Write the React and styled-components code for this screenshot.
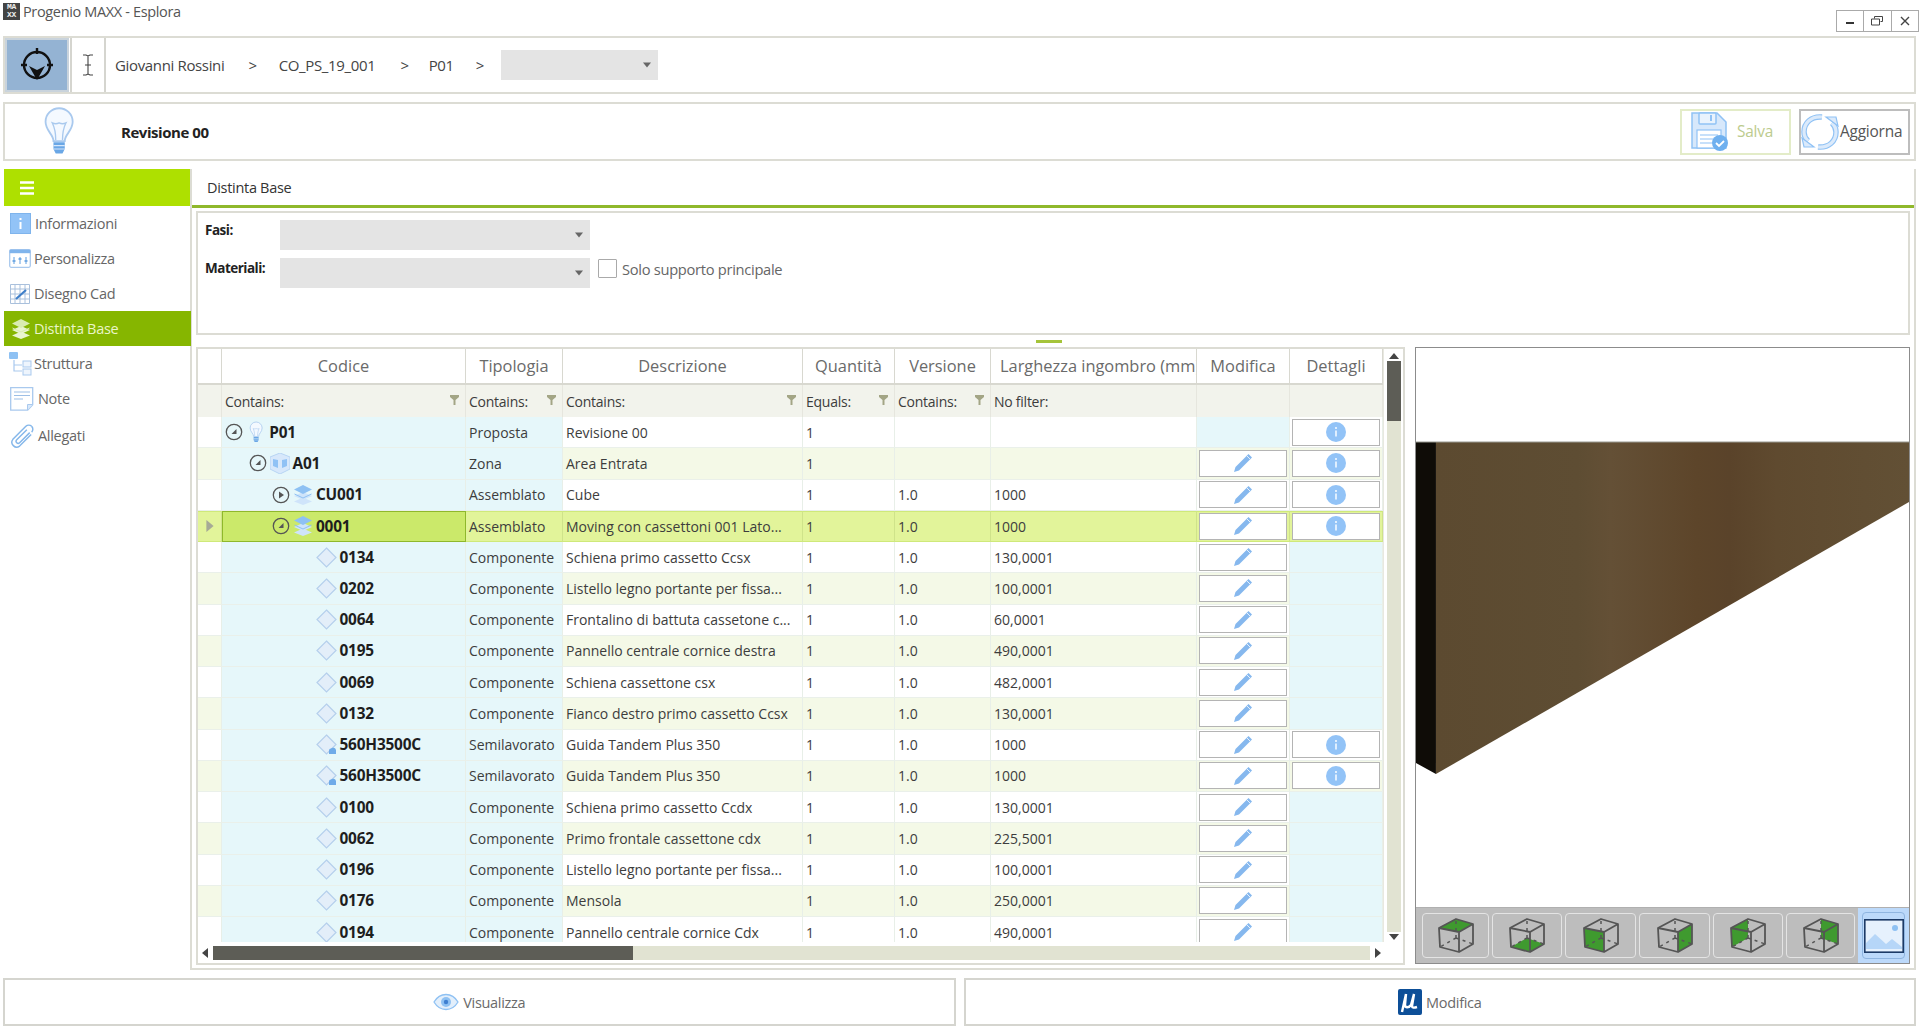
import React from "react"
import styled, { createGlobalStyle } from "styled-components"

const COLS = "24px 244px 97px 240px 92px 96px 206px 93px 93px"

const ROWS = [
  { code: "P01", type: "Proposta", desc: "Revisione 00", qty: "1", ver: "", size: "", level: 0, icon: "bulb", toggle: "open", noEdit: true, info: true },
  { code: "A01", type: "Zona", desc: "Area Entrata", qty: "1", ver: "", size: "", level: 1, icon: "zone", toggle: "open", info: true },
  { code: "CU001", type: "Assemblato", desc: "Cube", qty: "1", ver: "1.0", size: "1000", level: 2, icon: "layers", toggle: "closed", info: true },
  { code: "0001", type: "Assemblato", desc: "Moving con cassettoni 001 Lato...", qty: "1", ver: "1.0", size: "1000", level: 2, icon: "layers", toggle: "open", info: true, selected: true },
  { code: "0134", type: "Componente", desc: "Schiena primo cassetto Ccsx", qty: "1", ver: "1.0", size: "130,0001", level: 3, icon: "diamond" },
  { code: "0202", type: "Componente", desc: "Listello legno portante per fissa...", qty: "1", ver: "1.0", size: "100,0001", level: 3, icon: "diamond" },
  { code: "0064", type: "Componente", desc: "Frontalino di battuta cassetone c...", qty: "1", ver: "1.0", size: "60,0001", level: 3, icon: "diamond" },
  { code: "0195", type: "Componente", desc: "Pannello centrale cornice destra", qty: "1", ver: "1.0", size: "490,0001", level: 3, icon: "diamond" },
  { code: "0069", type: "Componente", desc: "Schiena cassettone csx", qty: "1", ver: "1.0", size: "482,0001", level: 3, icon: "diamond" },
  { code: "0132", type: "Componente", desc: "Fianco destro primo cassetto Ccsx", qty: "1", ver: "1.0", size: "130,0001", level: 3, icon: "diamond" },
  { code: "560H3500C", type: "Semilavorato", desc: "Guida Tandem Plus 350", qty: "1", ver: "1.0", size: "1000", level: 3, icon: "semi", info: true },
  { code: "560H3500C", type: "Semilavorato", desc: "Guida Tandem Plus 350", qty: "1", ver: "1.0", size: "1000", level: 3, icon: "semi", info: true },
  { code: "0100", type: "Componente", desc: "Schiena primo cassetto Ccdx", qty: "1", ver: "1.0", size: "130,0001", level: 3, icon: "diamond" },
  { code: "0062", type: "Componente", desc: "Primo frontale cassettone cdx", qty: "1", ver: "1.0", size: "225,5001", level: 3, icon: "diamond" },
  { code: "0196", type: "Componente", desc: "Listello legno portante per fissa...", qty: "1", ver: "1.0", size: "100,0001", level: 3, icon: "diamond" },
  { code: "0176", type: "Componente", desc: "Mensola", qty: "1", ver: "1.0", size: "250,0001", level: 3, icon: "diamond" },
  { code: "0194", type: "Componente", desc: "Pannello centrale cornice Cdx", qty: "1", ver: "1.0", size: "490,0001", level: 3, icon: "diamond" },
]

const FILTERS = ["Contains:", "Contains:", "Contains:", "Equals:", "Contains:", "No filter:"]

const blue = "#90c2f5"
const pale = "#d7e8fb"
const line = "#a9c9ee"

const Bulb = ({ size = 46 }) => (
  <svg width={size * 0.62} height={size} viewBox="0 0 28 46">
    <path d="M9 31c0-6-7-9-7-17a12 12 0 0 1 24 0c0 8-7 11-7 17z" fill="#f4f9ff" stroke={line} strokeWidth="1.6" />
    <path d="M11 30c0-6-1-11-3-15 2 1 4 1 6 0 2 1 4 1 6 0-2 4-3 9-3 15" fill="none" stroke={line} strokeWidth="1.2" />
    <path d="M9 32h10v6l-2 4h-6l-2-4z" fill="#6aa7e6" />
    <path d="M9 35h10M9 38h10" stroke="#d7e8fb" strokeWidth="1" />
  </svg>
)

const Target = () => (
  <svg width="34" height="36" viewBox="0 0 34 36">
    <circle cx="17" cy="18" r="13" fill="none" stroke="#111" strokeWidth="2.4" />
    <path d="M17 1v6M1 18h6M33 18h-6" stroke="#111" strokeWidth="2.4" />
    <path d="M9 19l8 4 8-4-8 14z" fill="#111" />
  </svg>
)

const Cursor = () => (
  <svg width="12" height="24" viewBox="0 0 12 24">
    <path d="M1 2h3l2 1 2-1h3M1 22h3l2-1 2 1h3M6 3v18M3 12h6" fill="none" stroke="#444" strokeWidth="1.1" />
  </svg>
)

const Save = () => (
  <svg width="38" height="40" viewBox="0 0 38 40">
    <path d="M1 1h25l9 9v26H1z" fill="#d7e8fb" stroke={blue} strokeWidth="1.5" />
    <rect x="8" y="1" width="17" height="11" rx="1" fill="#e9f3fd" stroke={blue} strokeWidth="1.5" />
    <rect x="19" y="3" width="2" height="6" fill={blue} />
    <rect x="6" y="18" width="24" height="18" fill="#fff" stroke={blue} strokeWidth="1.2" />
    <path d="M9 23h18M9 27h14M9 31h12" stroke={blue} strokeWidth="1.2" />
    <circle cx="29" cy="31" r="8" fill="#6fb0ef" />
    <path d="M25 31l3 3 5-5" fill="none" stroke="#fff" strokeWidth="1.8" />
  </svg>
)

const REFRESH_ARCS = "M21 4C10 3 3 10 3 19c0 4 2 7 4 9M17 34c11 1 18-6 18-15 0-4-2-7-4-9"

const Refresh = () => (
  <svg width="38" height="38" viewBox="0 0 38 38">
    <path d={REFRESH_ARCS} fill="none" stroke={blue} strokeWidth="5.5" />
    <path d={REFRESH_ARCS} fill="none" stroke="#dbeafb" strokeWidth="3.2" />
    <path d="M1 25l12 9H3zM37 13L25 4h10z" fill="#dbeafb" stroke={blue} strokeWidth="1.2" />
  </svg>
)

const MenuBars = () => (
  <svg width="14" height="14" viewBox="0 0 14 14">
    <path d="M0 1.5h14M0 7h14M0 12.5h14" stroke="#fff" strokeWidth="2.6" />
  </svg>
)

const NavInfo = () => (
  <svg width="21" height="21" viewBox="0 0 21 21">
    <rect x="0.5" y="0.5" width="20" height="20" fill="#92c3f7" stroke="#7fb4ec" />
    <path d="M10.5 5v2M10.5 9v7" stroke="#fff" strokeWidth="2" />
  </svg>
)

const NavCustom = () => (
  <svg width="22" height="19" viewBox="0 0 22 19">
    <rect x="0.7" y="0.7" width="20.6" height="17.6" rx="1.5" fill="#fff" stroke="#a9c9ee" strokeWidth="1.3" />
    <rect x="0.7" y="0.7" width="20.6" height="3.5" fill="#7fb4ec" />
    <path d="M5 8v7M11 8v7M17 8v7" stroke="#5f9ee0" strokeWidth="1" />
    <path d="M3.5 12h3M9.5 10h3M15.5 12h3" stroke="#5f9ee0" strokeWidth="1.6" />
  </svg>
)

const NavCad = () => (
  <svg width="20" height="20" viewBox="0 0 20 20">
    <path d="M.5.5h19v19H.5zM.5 5h19M.5 10h19M.5 15h19M5 .5v19M10 .5v19M15 .5v19" fill="#fff" stroke="#a9c0dc" strokeWidth="1" />
    <path d="M6 15L16 6" stroke="#3f7fc9" strokeWidth="2.2" />
  </svg>
)

const Layers = ({ size = 20, tone = "#8ec1f3", soft = "#cfe4fa" }) => (
  <svg width={size} height={size} viewBox="0 0 20 20">
    <path d="M10 12.5L1 16.5l9 3.5 9-3.5z" fill={soft} />
    <path d="M10 7L1 11l9 4 9-4z" fill={soft} />
    <path d="M10 0L1 4.5 10 9l9-4.5z" fill={tone} />
    <path d="M1.5 9l8.5 4 8.5-4" fill="none" stroke={tone} strokeWidth="1" />
  </svg>
)

const NavTree = () => (
  <svg width="24" height="24" viewBox="0 0 24 24">
    <path d="M5 8v11h8M5 13h8" fill="none" stroke="#a9c9ee" strokeWidth="1.2" />
    <rect x="0" y="0" width="9" height="7" rx="1" fill="#8ec1f3" />
    <rect x="14" y="9" width="8" height="6" fill="#eef5fd" stroke="#a9c9ee" />
    <rect x="14" y="17" width="8" height="6" fill="#eef5fd" stroke="#a9c9ee" />
  </svg>
)

const NavNote = () => (
  <svg width="24" height="24" viewBox="0 0 24 24">
    <path d="M.7.7h22v17l-5 5.5H.7z" fill="#fff" stroke="#a9c9ee" strokeWidth="1.3" />
    <path d="M4 5h16M4 8.5h16M4 12h9" stroke="#9dbfe6" strokeWidth="1" />
    <path d="M17.5 23v-5.5h5.2" fill="#d7e8fb" stroke="#a9c9ee" />
  </svg>
)

const NavClip = () => (
  <svg width="25" height="25" viewBox="0 0 26 26">
    <path d="M22.5 3.5a4.2 4.2 0 0 0-6 0L3 17a5 5 0 0 0 7 7L22 12M17.5 7L7 17.5a2 2 0 0 0 3 3L20.5 10M22.5 3.5a4.2 4.2 0 0 1 0 6" fill="none" stroke="#85b7ea" strokeWidth="1.5" />
  </svg>
)

const Toggle = ({ kind }) => (
  <svg width="18" height="18" viewBox="0 0 18 18">
    <circle cx="9" cy="9" r="7.7" fill="none" stroke="#555" strokeWidth="1.3" />
    {kind === "open" ? <path d="M6.5 11h5V6z" fill="#555" /> : <path d="M7 5.5L12 9l-5 3.5z" fill="#555" />}
  </svg>
)

const NodeIcon = ({ kind }) => {
  if (kind === "bulb") return <Bulb size={23} />
  if (kind === "layers") return <Layers size={20} />
  if (kind === "zone")
    return (
      <svg width="20" height="21" viewBox="0 0 20 21">
        <path d="M10 0l10 4v12l-10 5-10-5V4z" fill={pale} stroke="#b7d4f3" />
        <path d="M3 6l5 1v8l-5-2zM12 7l5-1v7l-5 2z" fill={blue} />
      </svg>
    )
  return (
    <svg width="21" height="21" viewBox="0 0 21 21">
      <path d="M10.5 1l9.5 9.5-9.5 9.5L1 10.5z" fill="#e3eef9" stroke="#b5cfec" strokeWidth="1.2" />
      {kind === "semi" && <path d="M13 20v-3.5a2 2 0 0 1 2-2 3 3 0 0 1 5 1.5v4z" fill="#6fabe9" />}
    </svg>
  )
}

const Pencil = () => (
  <svg width="20" height="20" viewBox="0 0 20 20">
    <path d="M15.5 1L19 4.5 6 17.5 1 19l1.5-5z" fill="#86b8ee" />
    <path d="M14 3l3.5 3.5" stroke="#e6f1fd" strokeWidth="1" />
  </svg>
)

const InfoDot = () => (
  <svg width="20" height="20" viewBox="0 0 20 20">
    <circle cx="10" cy="10" r="10" fill="#92c3f7" />
    <path d="M10 5v2M10 8.5v6" stroke="#e8f3fe" strokeWidth="1.8" />
  </svg>
)

const FunnelIcon = () => (
  <svg width="9" height="10" viewBox="0 0 9 10">
    <path d="M0 0h9v2L5.5 5v5h-2V5L0 2z" fill="#a3a585" />
  </svg>
)

const Arrow = ({ dir, size = 10 }) => {
  const shape = { up: "M5 2l5 6H0z", down: "M0 2h10L5 8z", left: "M8 0v10L2 5z", right: "M2 0l6 5-6 5z" }
  return (
    <svg width={size} height={size} viewBox="0 0 10 10">
      <path d={shape[dir]} fill="#444" />
    </svg>
  )
}

const Eye = () => (
  <svg width="26" height="18" viewBox="0 0 26 18">
    <path d="M1 9c6-10 18-10 24 0-6 10-18 10-24 0z" fill="#e3effb" stroke="#8ec1f3" strokeWidth="1.3" />
    <circle cx="13" cy="9" r="5" fill="#8ec1f3" />
    <circle cx="13" cy="9" r="2.2" fill="#3f7fd0" />
  </svg>
)

const MuLogo = () => (
  <svg width="24" height="26" viewBox="0 0 24 26">
    <rect width="24" height="26" rx="2" fill="#0d4f98" />
    <path d="M8 5L4 23M8 5l-1 11c0 3 4 3 6 0l3-11-2 12c0 2 2 2 5 1" fill="none" stroke="#fff" strokeWidth="2.4" />
  </svg>
)

const CUBE = {
  top: "1,10 18,1 35,6 21,14",
  bottom: "2,29 21,34 35,26 18,20",
  front: "1,10 21,14 21,34 2,29",
  right: "21,14 35,6 35,26 21,34",
  left: "1,10 18,1 18,20 2,29",
  back: "18,1 35,6 35,26 18,20",
}

const CubeView = ({ face }) => (
  <svg width="36" height="35" viewBox="0 0 36 35">
    <polygon points={CUBE[face]} fill="#3f9a2f" />
    <path d="M18 20V1M18 20L2 29M18 20l17 6" fill="none" stroke="#555" strokeWidth="1.5" strokeDasharray="3 4" />
    <path d="M1 10L18 1l17 5v20l-14 8-19-5zM1 10l20 4 14-8M21 14v20" fill="none" stroke="#555" strokeWidth="1.8" strokeLinejoin="round" />
  </svg>
)

const Picture = () => (
  <svg width="40" height="34" viewBox="0 0 40 34">
    <rect x="0.8" y="0.8" width="38.4" height="32.4" fill="#e6f1fd" stroke="#1c3a66" strokeWidth="1.6" />
    <path d="M2 30V24l9-9 11 10 6-5 10 8v2z" fill="#b6d6f8" />
    <circle cx="31" cy="9" r="3" fill="#8ec1f3" />
  </svg>
)

const WoodBoard = () => (
  <svg width="100%" height="100%" viewBox="0 0 494 559" preserveAspectRatio="none">
    <defs>
      <linearGradient id="wood" x1="0" y1="0" x2="1" y2="0">
        <stop offset="0" stopColor="#5c4a30" />
        <stop offset="0.3" stopColor="#5e4d33" />
        <stop offset="0.37" stopColor="#645036" />
        <stop offset="0.55" stopColor="#5d452a" />
        <stop offset="0.62" stopColor="#5a432a" />
        <stop offset="0.72" stopColor="#5f4a2f" />
        <stop offset="1" stopColor="#625035" />
      </linearGradient>
    </defs>
    <polygon points="20,94 494,94 494,154 20,426" fill="url(#wood)" />
    <polygon points="0,94 20,94 20,426 0,415" fill="#0f0c07" />
    <path d="M0 94h494" stroke="#9a9a92" strokeWidth="1" />
  </svg>
)

const GlobalStyle = createGlobalStyle`
  html, body {
    margin: 0;
    padding: 0;
    background: #fff;
    overflow: hidden;
  }
  * {
    box-sizing: border-box;
  }
`

const Page = styled.div`
  width: 1920px;
  height: 1027px;
  display: flex;
  flex-direction: column;
  padding: 0 4px 0 3px;
  font-family: "Open Sans", "Noto Sans", sans-serif;
  font-size: 14px;
  color: #3c3c3c;
  background: #fff;
`

const TitleBar = styled.div`
  height: 36px;
  display: flex;
  align-items: flex-start;
  justify-content: space-between;
  padding-top: 2px;
`

const AppName = styled.div`
  display: flex;
  align-items: center;
  gap: 3px;
  font-size: 14.5px;
  letter-spacing: -0.35px;
  color: #555;
`

const AppLogo = styled.div`
  width: 17px;
  height: 17px;
  background: #444;
  color: #eee;
  font: bold 8px/8px "Liberation Mono", monospace;
  text-align: center;
`

const WindowButtons = styled.div`
  display: flex;
  margin: 8px -3px 0 0;
`

const WindowButton = styled.div`
  width: 28.5px;
  height: 22px;
  border: 1px solid #aaa;
  margin-left: -1px;
  display: flex;
  align-items: center;
  justify-content: center;
  background: #fff;
`

const Bar = styled.div`
  height: ${(p) => p.$height}px;
  border: 2px solid #dcdcd4;
  display: flex;
  align-items: center;
  margin-top: ${(p) => p.$gap || 0}px;
  flex: none;
`

const TargetButton = styled.div`
  width: 64px;
  height: 54px;
  background: #94b3d3;
  border: 2px solid #c9d3dc;
  display: flex;
  align-items: center;
  justify-content: center;
`

const CursorCell = styled.div`
  width: 36px;
  height: 100%;
  border-left: 2px solid #d5d5cf;
  border-right: 2px solid #d5d5cf;
  display: flex;
  align-items: center;
  justify-content: center;
  margin-left: 1px;
`

const Crumbs = styled.div`
  display: flex;
  align-items: center;
  padding-left: 9px;
  font-size: 15px;
  letter-spacing: -0.35px;
  color: #444;
`

const Crumb = styled.span`
  margin-right: ${(p) => p.$gap}px;
`

const Combo = styled.div`
  width: ${(p) => p.$width}px;
  height: 30px;
  background: #e4e4e4;
  display: flex;
  align-items: center;
  justify-content: flex-end;
  padding-right: 7px;
  flex: none;
  svg path {
    fill: #666;
  }
`

const BulbCell = styled.div`
  width: 86px;
  padding-left: 38px;
  display: flex;
  align-items: center;
`

const RevTitle = styled.div`
  flex: 1;
  margin-left: 30px;
  font-weight: 700;
  font-size: 15px;
  letter-spacing: -0.45px;
  color: #222;
`

const ActionButton = styled.div`
  height: 46px;
  width: ${(p) => p.$width}px;
  margin-right: ${(p) => p.$right}px;
  border: 2px solid ${(p) => (p.$muted ? "#e3ecc8" : "#bdbdbd")};
  color: ${(p) => (p.$muted ? "#bccb8e" : "#555")};
  display: flex;
  align-items: center;
  gap: ${(p) => (p.$muted ? 8 : 1)}px;
  padding-left: ${(p) => (p.$muted ? 9 : 0)}px;
  font-size: 15.4px;
  letter-spacing: -0.2px;
`

const Main = styled.div`
  height: 801px;
  margin-top: 8px;
  display: flex;
  flex: none;
`

const Sidebar = styled.nav`
  width: 189px;
  border-right: 2px solid #dcdcd4;
  padding-left: 1px;
  flex: none;
`

const MenuButton = styled.div`
  height: 37px;
  background: #aee000;
  display: flex;
  align-items: center;
  padding-left: 16px;
`

const NavItem = styled.div`
  height: 35px;
  margin-right: -1px;
  display: flex;
  align-items: center;
  padding-left: ${(p) => p.$pad}px;
  gap: ${(p) => p.$space}px;
  font-size: 14.5px;
  letter-spacing: -0.3px;
  background: ${(p) => (p.$active ? "#86b600" : "transparent")};
  color: ${(p) => (p.$active ? "#eaf5c8" : "#666")};
  margin-bottom: ${(p) => (p.$tail ? 2 : 0)}px;
`

const Content = styled.div`
  flex: 1;
  min-width: 0;
  display: flex;
  flex-direction: column;
  border-right: 2px solid #dcdcd4;
  border-bottom: 2px solid #dcdcd4;
`

const TabStrip = styled.div`
  height: 39px;
  border-bottom: 3px solid #8fb82b;
  padding: 9px 0 0 15px;
  font-size: 14.5px;
  letter-spacing: -0.3px;
  color: #333;
  flex: none;
`

const FilterPanel = styled.div`
  height: 124px;
  margin: 3px 4px 0 4px;
  border: 2px solid #dcdcd4;
  padding: 7px 0 0 7px;
  display: grid;
  grid-template-columns: 75px 310px auto 1fr;
  grid-auto-rows: 30px;
  row-gap: 8px;
  flex: none;
`

const FilterLabel = styled.label`
  font-weight: 700;
  font-size: 13.5px;
  letter-spacing: -0.5px;
  color: #222;
  line-height: 20px;
`

const CheckRow = styled.div`
  display: flex;
  align-items: center;
  gap: 4px;
  margin: -9px 0 0 8px;
  font-size: 14.7px;
  letter-spacing: -0.3px;
  color: #666;
  grid-column: 3;
`

const CheckBox = styled.span`
  width: 19px;
  height: 19px;
  border: 1px solid #aaa;
  border-radius: 1px;
  background: #fff;
  margin-right: 1px;
`

const SplitterGrip = styled.div`
  width: 26px;
  height: 3px;
  background: #a5c43a;
  margin: 5px 0 4px 844px;
  flex: none;
`

const Body = styled.div`
  flex: 1;
  min-height: 0;
  display: flex;
  padding: 0 0 3px 4px;
`

const GridFrame = styled.div`
  width: 1209px;
  border: 2px solid #dcdcd4;
  display: grid;
  grid-template-columns: 1185px 20px;
  grid-template-rows: 1fr 21px;
  flex: none;
  height: 100%;
  margin-right: 10px;
`

const GridView = styled.div`
  overflow: hidden;
  min-height: 0;
`

const Row = styled.div`
  display: grid;
  grid-template-columns: ${COLS};
  height: ${(p) => p.$h}px;
`

const HeadCell = styled.div`
  border-right: 1px solid #d8d8d0;
  border-bottom: 2px solid #d8d8d0;
  text-align: ${(p) => (p.$left ? "left" : "center")};
  padding-left: ${(p) => (p.$left ? 9 : 0)}px;
  font-size: 16.4px;
  line-height: 34px;
  color: #6a6a6a;
  white-space: nowrap;
  overflow: hidden;
`

const FilterCell = styled.div`
  background: #f2f3ec;
  border-right: 1px solid #e6e6de;
  display: flex;
  align-items: center;
  justify-content: space-between;
  padding: 0 6px 0 3px;
  font-size: 14px;
  letter-spacing: -0.25px;
  color: #3c3c3c;
  svg {
    margin-top: -2px;
  }
`

const cellBg = (p) => {
  if (p.$sel) return p.$key ? "#cbe96a" : "#e2f49a"
  if (p.$tint) return "#e6f7fa"
  return p.$alt ? "#f4f9e7" : "#fff"
}

const Cell = styled.div`
  position: relative;
  background: ${cellBg};
  border-right: 1px solid ${(p) => (p.$sel ? "#cfe38a" : "#e8efe8")};
  border-bottom: 1px solid ${(p) => (p.$sel ? "#cfe97a" : "#eaf0ea")};
  border-top: ${(p) => (p.$sel ? "1px solid #cfe97a" : "none")};
  outline: ${(p) => (p.$key ? "1px solid #8fb82b" : "none")};
  outline-offset: -1px;
  display: flex;
  align-items: center;
  padding-left: 3px;
  font-size: 14px;
  color: #3d3d3d;
  white-space: nowrap;
  overflow: hidden;
`

const RowMark = styled(Cell)`
  justify-content: center;
  padding-left: 0;
  svg path {
    fill: #a6aa96;
  }
`

const CodeCell = styled(Cell)`
  padding-left: ${(p) => 3 + p.$level * 23.5}px;
  gap: ${(p) => (p.$level === 0 ? 6 : 3)}px;
`

const CodeText = styled.b`
  font-size: 15.4px;
  letter-spacing: -0.2px;
  color: #1e1e1e;
`

const ToggleSpot = styled.span`
  width: 18px;
  display: flex;
  flex: none;
`

const LeafSpot = styled.span`
  width: 17px;
  flex: none;
`

const ActionCell = styled(Cell)`
  padding: 1px 2px;
`

const GridButton = styled.div`
  width: 100%;
  height: 27px;
  background: #fff;
  border: 1px solid #b4b4b4;
  display: flex;
  align-items: center;
  justify-content: center;
`

const ScrollTrackY = styled.div`
  background: #fff;
  border-left: 1px solid #e8e8e0;
  display: flex;
  flex-direction: column;
  align-items: center;
  padding: 2px 2px 0;
`

const ThumbY = styled.div`
  width: 14px;
  height: 60px;
  background: #5d5d56;
`

const RailY = styled.div`
  width: 14px;
  flex: 1;
  background: #e1e3d2;
`

const ScrollTrackX = styled.div`
  display: flex;
  align-items: center;
  padding: 0 0 0 2px;
  gap: 3px;
  grid-column: 1;
`

const RailX = styled.div`
  flex: 1;
  height: 14px;
  background: #e1e3d2;
`

const ThumbX = styled.div`
  width: 420px;
  height: 100%;
  background: #5d5d56;
`

const ViewerFrame = styled.div`
  flex: 1;
  margin-right: 5px;
  border: 1px solid #8c8c8c;
  display: flex;
  flex-direction: column;
  height: 617px;
`

const ViewerCanvas = styled.div`
  flex: 1;
  min-height: 0;
  background: #fff;
`

const ViewerTools = styled.div`
  height: 56px;
  background: #bdbdbd;
  border-top: 1px solid #b0b0b0;
  display: flex;
  align-items: center;
  padding-left: 6px;
  gap: 3px;
  flex: none;
`

const ViewButton = styled.div`
  width: ${(p) => p.$width}px;
  height: 45px;
  border: 1px solid #e4e4e4;
  border-radius: 4px;
  display: flex;
  align-items: center;
  justify-content: center;
`

const PictureButton = styled.div`
  width: 51px;
  height: 100%;
  margin-left: auto;
  background: #bcd9fa;
  display: flex;
  align-items: center;
  justify-content: center;
  padding: 4px;
`

const PictureInner = styled.div`
  height: 100%;
  width: 100%;
  border: 1px solid #8fb5e0;
  border-radius: 4px;
  display: flex;
  align-items: center;
  justify-content: center;
`

const Footer = styled.div`
  height: 48px;
  margin-top: 8px;
  display: flex;
  gap: 8px;
  flex: none;
`

const FooterButton = styled.div`
  flex: 1;
  border: 2px solid #d5d5cf;
  display: flex;
  align-items: center;
  justify-content: center;
  gap: 4px;
  font-size: 14.5px;
  letter-spacing: -0.3px;
  color: #6a6a6a;
`

const VIEWS = [
  { face: "top", width: 67 },
  { face: "bottom", width: 70 },
  { face: "front", width: 71 },
  { face: "right", width: 71 },
  { face: "left", width: 70 },
  { face: "back", width: 69 },
]

const HEADS = ["Codice", "Tipologia", "Descrizione", "Quantità", "Versione"]

const TreeRow = ({ row, alt }) => {
  const base = { $alt: alt, $sel: row.selected }
  return (
    <Row $h={31.25}>
      <RowMark {...base}>{row.selected && <Arrow dir="right" size={12} />}</RowMark>
      <CodeCell {...base} $tint $key={row.selected} $level={row.level}>
        {row.toggle ? (
          <ToggleSpot>
            <Toggle kind={row.toggle} />
          </ToggleSpot>
        ) : (
          <LeafSpot />
        )}
        <NodeIcon kind={row.icon} />
        <CodeText>{row.code}</CodeText>
      </CodeCell>
      <Cell {...base} $tint>{row.type}</Cell>
      <Cell {...base}>{row.desc}</Cell>
      <Cell {...base}>{row.qty}</Cell>
      <Cell {...base}>{row.ver}</Cell>
      <Cell {...base}>{row.size}</Cell>
      {row.noEdit ? (
        <Cell {...base} $tint />
      ) : (
        <ActionCell {...base}>
          <GridButton>
            <Pencil />
          </GridButton>
        </ActionCell>
      )}
      {row.info ? (
        <ActionCell {...base}>
          <GridButton>
            <InfoDot />
          </GridButton>
        </ActionCell>
      ) : (
        <Cell {...base} $tint />
      )}
    </Row>
  )
}

export default function App() {
  return (
    <Page>
      <GlobalStyle />
      <TitleBar>
        <AppName>
          <AppLogo>MA XX</AppLogo>
          Progenio MAXX - Esplora
        </AppName>
        <WindowButtons>
          <WindowButton>
            <svg width="10" height="10" viewBox="0 0 10 10">
              <path d="M1 7h8" stroke="#333" strokeWidth="2" />
            </svg>
          </WindowButton>
          <WindowButton>
            <svg width="12" height="10" viewBox="0 0 12 10">
              <path d="M3.5 2.5V.5h8v5h-2M.5 3h8v6h-8z" fill="none" stroke="#444" />
            </svg>
          </WindowButton>
          <WindowButton>
            <svg width="10" height="10" viewBox="0 0 10 10">
              <path d="M1 1l8 8M9 1l-8 8" stroke="#444" strokeWidth="1.4" />
            </svg>
          </WindowButton>
        </WindowButtons>
      </TitleBar>

      <Bar $height={58}>
        <TargetButton>
          <Target />
        </TargetButton>
        <CursorCell>
          <Cursor />
        </CursorCell>
        <Crumbs>
          <Crumb $gap={24}>Giovanni Rossini</Crumb>
          <Crumb $gap={22}>&gt;</Crumb>
          <Crumb $gap={25}>CO_PS_19_001</Crumb>
          <Crumb $gap={20}>&gt;</Crumb>
          <Crumb $gap={22}>P01</Crumb>
          <Crumb $gap={17}>&gt;</Crumb>
          <Combo $width={157}>
            <Arrow dir="down" size={8} />
          </Combo>
        </Crumbs>
      </Bar>

      <Bar $height={59} $gap={8}>
        <BulbCell>
          <Bulb size={52} />
        </BulbCell>
        <RevTitle>Revisione 00</RevTitle>
        <ActionButton $width={111} $right={8} $muted>
          <Save />
          Salva
        </ActionButton>
        <ActionButton $width={111} $right={4}>
          <Refresh />
          Aggiorna
        </ActionButton>
      </Bar>

      <Main>
        <Sidebar>
          <MenuButton>
            <MenuBars />
          </MenuButton>
          <NavItem $pad={6} $space={4}>
            <NavInfo />
            Informazioni
          </NavItem>
          <NavItem $pad={5} $space={3}>
            <NavCustom />
            Personalizza
          </NavItem>
          <NavItem $pad={6} $space={4}>
            <NavCad />
            Disegno Cad
          </NavItem>
          <NavItem $pad={7} $space={3} $active>
            <Layers size={20} tone="#d9ecb0" soft="#e9f5cf" />
            Distinta Base
          </NavItem>
          <NavItem $pad={5} $space={1}>
            <NavTree />
            Struttura
          </NavItem>
          <NavItem $pad={6} $space={4} $tail>
            <NavNote />
            Note
          </NavItem>
          <NavItem $pad={6} $space={3}>
            <NavClip />
            Allegati
          </NavItem>
        </Sidebar>

        <Content>
          <TabStrip>Distinta Base</TabStrip>
          <FilterPanel>
            <FilterLabel>Fasi:</FilterLabel>
            <Combo $width={310}>
              <Arrow dir="down" size={8} />
            </Combo>
            <span />
            <span />
            <FilterLabel>Materiali:</FilterLabel>
            <Combo $width={310}>
              <Arrow dir="down" size={8} />
            </Combo>
            <CheckRow>
              <CheckBox />
              Solo supporto principale
            </CheckRow>
          </FilterPanel>
          <SplitterGrip />
          <Body>
            <GridFrame>
              <GridView>
                <Row $h={36}>
                  <HeadCell />
                  {HEADS.map((h) => (
                    <HeadCell key={h}>{h}</HeadCell>
                  ))}
                  <HeadCell $left>Larghezza ingombro (mm)</HeadCell>
                  <HeadCell>Modifica</HeadCell>
                  <HeadCell>Dettagli</HeadCell>
                </Row>
                <Row $h={32}>
                  <FilterCell />
                  {FILTERS.map((f, i) => (
                    <FilterCell key={i}>
                      {f}
                      {i < 5 && <FunnelIcon />}
                    </FilterCell>
                  ))}
                  <FilterCell />
                  <FilterCell />
                </Row>
                {ROWS.map((row, i) => (
                  <TreeRow key={i} row={row} alt={i % 2 === 1} />
                ))}
              </GridView>
              <ScrollTrackY>
                <Arrow dir="up" />
                <ThumbY />
                <RailY />
                <Arrow dir="down" />
              </ScrollTrackY>
              <ScrollTrackX>
                <Arrow dir="left" />
                <RailX>
                  <ThumbX />
                </RailX>
                <Arrow dir="right" />
              </ScrollTrackX>
            </GridFrame>

            <ViewerFrame>
              <ViewerCanvas>
                <WoodBoard />
              </ViewerCanvas>
              <ViewerTools>
                {VIEWS.map((v) => (
                  <ViewButton key={v.face} $width={v.width}>
                    <CubeView face={v.face} />
                  </ViewButton>
                ))}
                <PictureButton>
                  <PictureInner>
                    <Picture />
                  </PictureInner>
                </PictureButton>
              </ViewerTools>
            </ViewerFrame>
          </Body>
        </Content>
      </Main>

      <Footer>
        <FooterButton>
          <Eye />
          Visualizza
        </FooterButton>
        <FooterButton>
          <MuLogo />
          Modifica
        </FooterButton>
      </Footer>
    </Page>
  )
}
